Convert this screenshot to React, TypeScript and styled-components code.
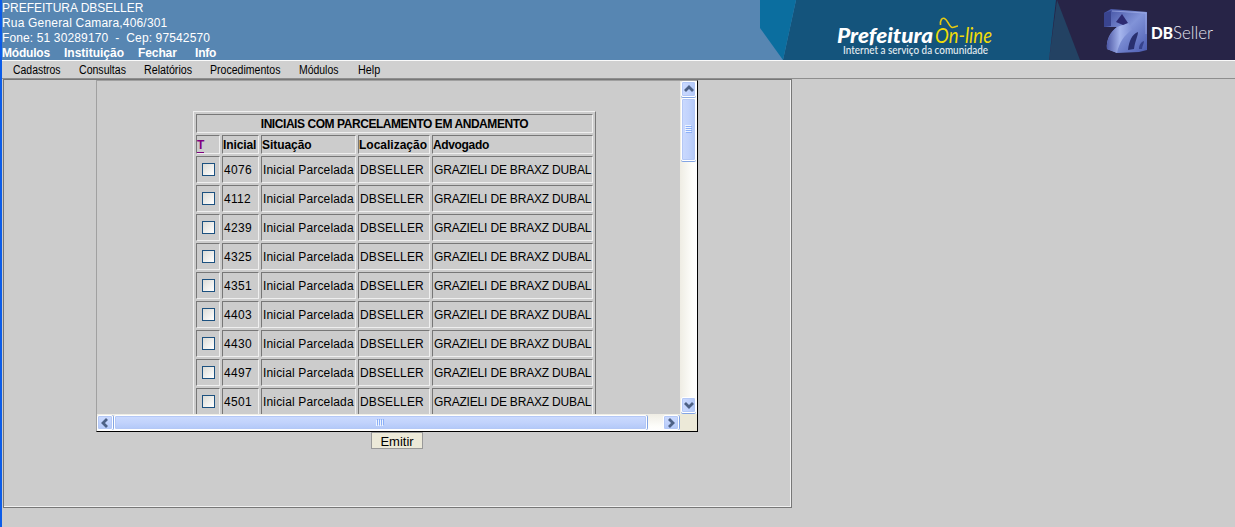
import React from "react";
import styled, { createGlobalStyle } from "styled-components";

const Global = createGlobalStyle`
  * { box-sizing: border-box; }
  html, body { margin: 0; padding: 0; background: #ccc; overflow: hidden; }
  body { font-family: "Liberation Sans", Arial, sans-serif; font-size: 12px; color: #000; }
`;

const Page = styled.div`
  width: 1235px;
  height: 527px;
  border-left: 2px solid #0c5ce8;
  background: #ccc;
  display: flex;
  flex-direction: column;
`;

const Header = styled.header`
  height: 60px;
  flex: none;
  display: flex;
  justify-content: space-between;
  background: #5786b2;
  color: #fff;
`;

const Company = styled.div`
  display: flex;
  flex-direction: column;
  padding-top: 1px;
`;

const Line = styled.div<{ $ls?: number }>`
  height: 15px;
  line-height: 15px;
  white-space: pre;
  letter-spacing: ${(p) => p.$ls ?? 0}px;
`;

const MainNav = styled.nav`
  display: flex;
  height: 14px;
  line-height: 14px;
  font-weight: bold;
`;

const NavItem = styled.span<{ $w: number; $ls?: number }>`
  width: ${(p) => p.$w}px;
  white-space: nowrap;
  letter-spacing: ${(p) => p.$ls ?? 0}px;
`;

const Banner = styled.svg`
  display: block;
  flex: none;
`;

const MenuBar = styled.nav`
  height: 19px;
  flex: none;
  display: flex;
  padding-left: 11px;
  background: #d0d0d0;
  border-top: 1px solid #fafafa;
  border-bottom: 1px solid #8e8e8e;
`;

const MenuItem = styled.span<{ $w: number; $scale: number }>`
  width: ${(p) => p.$w}px;
  line-height: 18px;
  white-space: nowrap;
  transform: scaleX(${(p) => p.$scale});
  transform-origin: 0 0;
`;

const Workspace = styled.main`
  margin-left: 1px;
  width: 789px;
  height: 429px;
  border: 1px solid #777;
  box-shadow: inset -1px -1px 0 #f0f0f0;
  display: flex;
  flex-direction: column;
  padding-left: 92px;
`;

const Frame = styled.section`
  width: 602px;
  height: 352px;
  flex: none;
  border: 1px solid;
  border-color: #a0a0a0 #000 #000 #a0a0a0;
  display: grid;
  grid-template-columns: 583px 17px;
  grid-template-rows: 333px 17px;
`;

const Content = styled.div`
  overflow: hidden;
  padding: 30px 0 0 96px;
`;

const Table = styled.table`
  width: 403px;
  table-layout: fixed;
  border-collapse: separate;
  border-spacing: 2px;
  border: 1px solid;
  border-color: #efefef #777 #777 #efefef;
`;

const Cell = styled.td<{ $ls?: number }>`
  height: 27px;
  padding: 2px 1px 0;
  border: 1px solid;
  border-color: #777 #efefef #efefef #777;
  line-height: 15px;
  white-space: nowrap;
  letter-spacing: ${(p) => p.$ls ?? 0}px;
`;

const CheckCell = styled(Cell)`
  padding-top: 0;
`;

const HeadCell = styled(Cell).attrs({ as: "th" })<{ $center?: boolean }>`
  height: 19px;
  padding: 2px 0 0;
  text-align: ${(p) => (p.$center ? "center" : "left")};
  font-weight: bold;
`;

const ToggleLink = styled.span`
  color: #800080;
  display: block;
  width: 7px;
  height: 15px;
  line-height: 15px;
  border-bottom: 1px solid #800080;
`;

const CheckBox = styled.span`
  display: block;
  width: 13px;
  height: 13px;
  margin: 0 0 0 4px;
  border: 1px solid #1c5180;
  background: linear-gradient(135deg, #dcdcd7, #fff);
`;

const VBar = styled.div`
  display: flex;
  flex-direction: column;
  padding-left: 1px;
  background: linear-gradient(90deg, #efede4, #fdfdfa 70%, #fff);
`;

const HBar = styled.div`
  display: flex;
  padding-top: 1px;
  background: linear-gradient(#efede4, #fdfdfa 70%, #fff);
`;

const Corner = styled.div`
  background: #ece9d8;
`;

const Knob = styled.div<{ $w: number; $h: number; $vertical?: boolean }>`
  flex: none;
  width: ${(p) => p.$w}px;
  height: ${(p) => p.$h}px;
  border: 1px solid #fff;
  border-radius: 2px;
  background: linear-gradient(${(p) => (p.$vertical ? "90deg" : "180deg")}, #cbdafe, #c2d3fc 50%, #b2c8f8);
  box-shadow: inset 0 0 0 1px #b4c8f6, ${(p) => (p.$vertical ? "0 1px 0 #83a5e4" : "1px 0 0 #83a5e4")};
  display: flex;
  align-items: center;
  justify-content: center;
`;

const Gap = styled.div<{ $size: number }>`
  flex: 0 0 ${(p) => p.$size}px;
`;

const EmitButton = styled.button`
  width: 52px;
  height: 17px;
  margin-left: 275px;
  padding: 1px 0 0;
  border: 1px solid #999;
  background: #ece9d8;
  font: 13px/16px "Liberation Sans", Arial, sans-serif;
  color: #000;
`;

const arrows = {
  up: "M1 7L5 3L9 7",
  down: "M1 3L5 7L9 3",
  left: "M7 1L3 5L7 9",
  right: "M3 1L7 5L3 9",
};

function Arrow({ dir }: { dir: keyof typeof arrows }) {
  return (
    <svg width="10" height="10" viewBox="0 0 10 10">
      <path d={arrows[dir]} fill="none" stroke="#4d6185" strokeWidth="2.8" />
    </svg>
  );
}

function Grip({ vertical }: { vertical?: boolean }) {
  return (
    <svg width="9" height="9" viewBox="0 0 9 9" shapeRendering="crispEdges" transform={vertical ? undefined : "rotate(-90)"}>
      <path d="M1 .5h6M1 2.5h6M1 4.5h6M1 6.5h6" stroke="#eef4fe" />
      <path d="M2 1.5h6M2 3.5h6M2 5.5h6M2 7.5h6" stroke="#8cb0f8" />
    </svg>
  );
}

function BrandBanner() {
  return (
    <Banner width="475" height="60" viewBox="760 0 475 60">
      <defs>
        <linearGradient id="cubeFace" x1="0" y1="0" x2="1" y2="1">
          <stop offset="0" stopColor="#3e4c9e" />
          <stop offset=".5" stopColor="#8193d8" />
          <stop offset="1" stopColor="#4a5ab0" />
        </linearGradient>
        <linearGradient id="cubeStem" x1="0" y1="0" x2="1" y2="0">
          <stop offset="0" stopColor="#4d58a5" />
          <stop offset=".5" stopColor="#a5b5ed" />
          <stop offset="1" stopColor="#7a8bd3" />
        </linearGradient>
      </defs>
      <path d="M796 0H1057L1049 60H783Z" fill="#14547c" />
      <path d="M760 0H796L783 60L760 28Z" fill="#0b6e9f" />
      <path d="M1056 0H1235V60H1049Z" fill="#272447" />
      <path d="M1057 0L1080 60H1049Z" fill="#234263" />
      <text x="837" y="43" fontFamily="Lato, sans-serif" fontStyle="italic" fontSize="21" fontWeight="900" fill="#fff" textLength="96" lengthAdjust="spacingAndGlyphs">Prefeitura</text>
      <text x="935" y="43" fontFamily="Lato, sans-serif" fontStyle="italic" fontSize="22" fill="#f1dc08" textLength="57" lengthAdjust="spacingAndGlyphs">On-line</text>
      <path d="M940.500 25C940 20 942 17.500 944.500 18.500C948 20 949 27 952.500 27.500C954.500 27.500 956 26 958 26" fill="none" stroke="#e7c912" strokeWidth="1.6" />
      <text x="843" y="54" fontFamily="Lato, sans-serif" fontSize="10.5" fontWeight="500" fill="#e4edf2" textLength="145" lengthAdjust="spacingAndGlyphs">Internet a serviço da comunidade</text>
      <path d="M1104 13L1111 9L1147 12L1147 50L1139 52L1117 53L1107 49C1106 40 1110 32 1117 27L1104 27Z" fill="url(#cubeFace)" />
      <path d="M1104 13L1111 11V26L1104 27Z" fill="#39448f" />
      <path d="M1117 27C1110 33 1106 41 1107 49L1117 53C1119 43 1124 35 1133 29L1128 23Z" fill="url(#cubeStem)" />
      <path d="M1122 14L1128 23L1123 25L1116 22Z" fill="#2c2a72" />
      <path d="M1128 50C1129 41 1132 34 1138 32C1138 36 1135 41 1134 49Z" fill="#29306f" />
      <path d="M1139 49C1139 45 1141 42 1144 41C1144 44 1142 46 1142 49Z" fill="#36428c" />
      <path d="M1112 11L1146 13V34" fill="none" stroke="#a3afe8" strokeWidth="1" opacity=".7" />
      <text x="1151" y="39" fontFamily="Lato, sans-serif" fontSize="17.5" fontWeight="900" fill="#fff" textLength="22" lengthAdjust="spacingAndGlyphs">DB</text>
      <text x="1173" y="39" fontFamily="Lato, sans-serif" fontSize="18" fontWeight="300" fill="#e4e3ee" textLength="40" lengthAdjust="spacingAndGlyphs">Seller</text>
    </Banner>
  );
}

const menu: [string, number, number][] = [
  ["Cadastros", 66, 0.87],
  ["Consultas", 65, 0.88],
  ["Relatórios", 66, 0.89],
  ["Procedimentos", 89, 0.88],
  ["Módulos", 59, 0.87],
  ["Help", 40, 0.9],
];

const ids = ["4076", "4112", "4239", "4325", "4351", "4403", "4430", "4497", "4501"];

export default function App() {
  return (
    <Page>
      <Global />
      <Header>
        <Company>
          <Line>PREFEITURA DBSELLER</Line>
          <Line $ls={0.18}>Rua General Camara,406/301</Line>
          <Line $ls={0.13}>{"Fone: 51 30289170  -  Cep: 97542570"}</Line>
          <MainNav>
            <NavItem $w={62} $ls={-0.2}>Módulos</NavItem>
            <NavItem $w={74}>Instituição</NavItem>
            <NavItem $w={57} $ls={-0.1}>Fechar</NavItem>
            <NavItem $w={30} $ls={-0.2}>Info</NavItem>
          </MainNav>
        </Company>
        <BrandBanner />
      </Header>
      <MenuBar>
        {menu.map(([label, w, scale]) => (
          <MenuItem key={label} $w={w} $scale={scale}>{label}</MenuItem>
        ))}
      </MenuBar>
      <Workspace>
        <Frame>
          <Content>
            <Table>
              <colgroup>
                <col style={{ width: 24 }} />
                <col style={{ width: 37 }} />
                <col style={{ width: 95 }} />
                <col style={{ width: 72 }} />
                <col style={{ width: 161 }} />
              </colgroup>
              <tbody>
                <tr>
                  <HeadCell colSpan={5} $center $ls={-0.44}>INICIAIS COM PARCELAMENTO EM ANDAMENTO</HeadCell>
                </tr>
                <tr>
                  <HeadCell><ToggleLink>T</ToggleLink></HeadCell>
                  <HeadCell $ls={-0.1}>Inicial</HeadCell>
                  <HeadCell $ls={-0.05}>Situação</HeadCell>
                  <HeadCell>Localização</HeadCell>
                  <HeadCell $ls={-0.35}>Advogado</HeadCell>
                </tr>
                {ids.map((id) => (
                  <tr key={id}>
                    <CheckCell><CheckBox /></CheckCell>
                    <Cell $ls={0.3}>{id}</Cell>
                    <Cell $ls={0.16}>Inicial Parcelada</Cell>
                    <Cell $ls={0.15}>DBSELLER</Cell>
                    <Cell $ls={-0.18}>GRAZIELI DE BRAXZ DUBAL</Cell>
                  </tr>
                ))}
              </tbody>
            </Table>
          </Content>
          <VBar>
            <Knob $w={15} $h={16} $vertical><Arrow dir="up" /></Knob>
            <Gap $size={1} />
            <Knob $w={15} $h={63} $vertical><Grip vertical /></Knob>
            <Gap $size={236} />
            <Knob $w={15} $h={16} $vertical><Arrow dir="down" /></Knob>
          </VBar>
          <HBar>
            <Knob $w={16} $h={15}><Arrow dir="left" /></Knob>
            <Gap $size={1} />
            <Knob $w={533} $h={15}><Grip /></Knob>
            <Gap $size={16} />
            <Knob $w={16} $h={15}><Arrow dir="right" /></Knob>
          </HBar>
          <Corner />
        </Frame>
        <EmitButton>Emitir</EmitButton>
      </Workspace>
    </Page>
  );
}
